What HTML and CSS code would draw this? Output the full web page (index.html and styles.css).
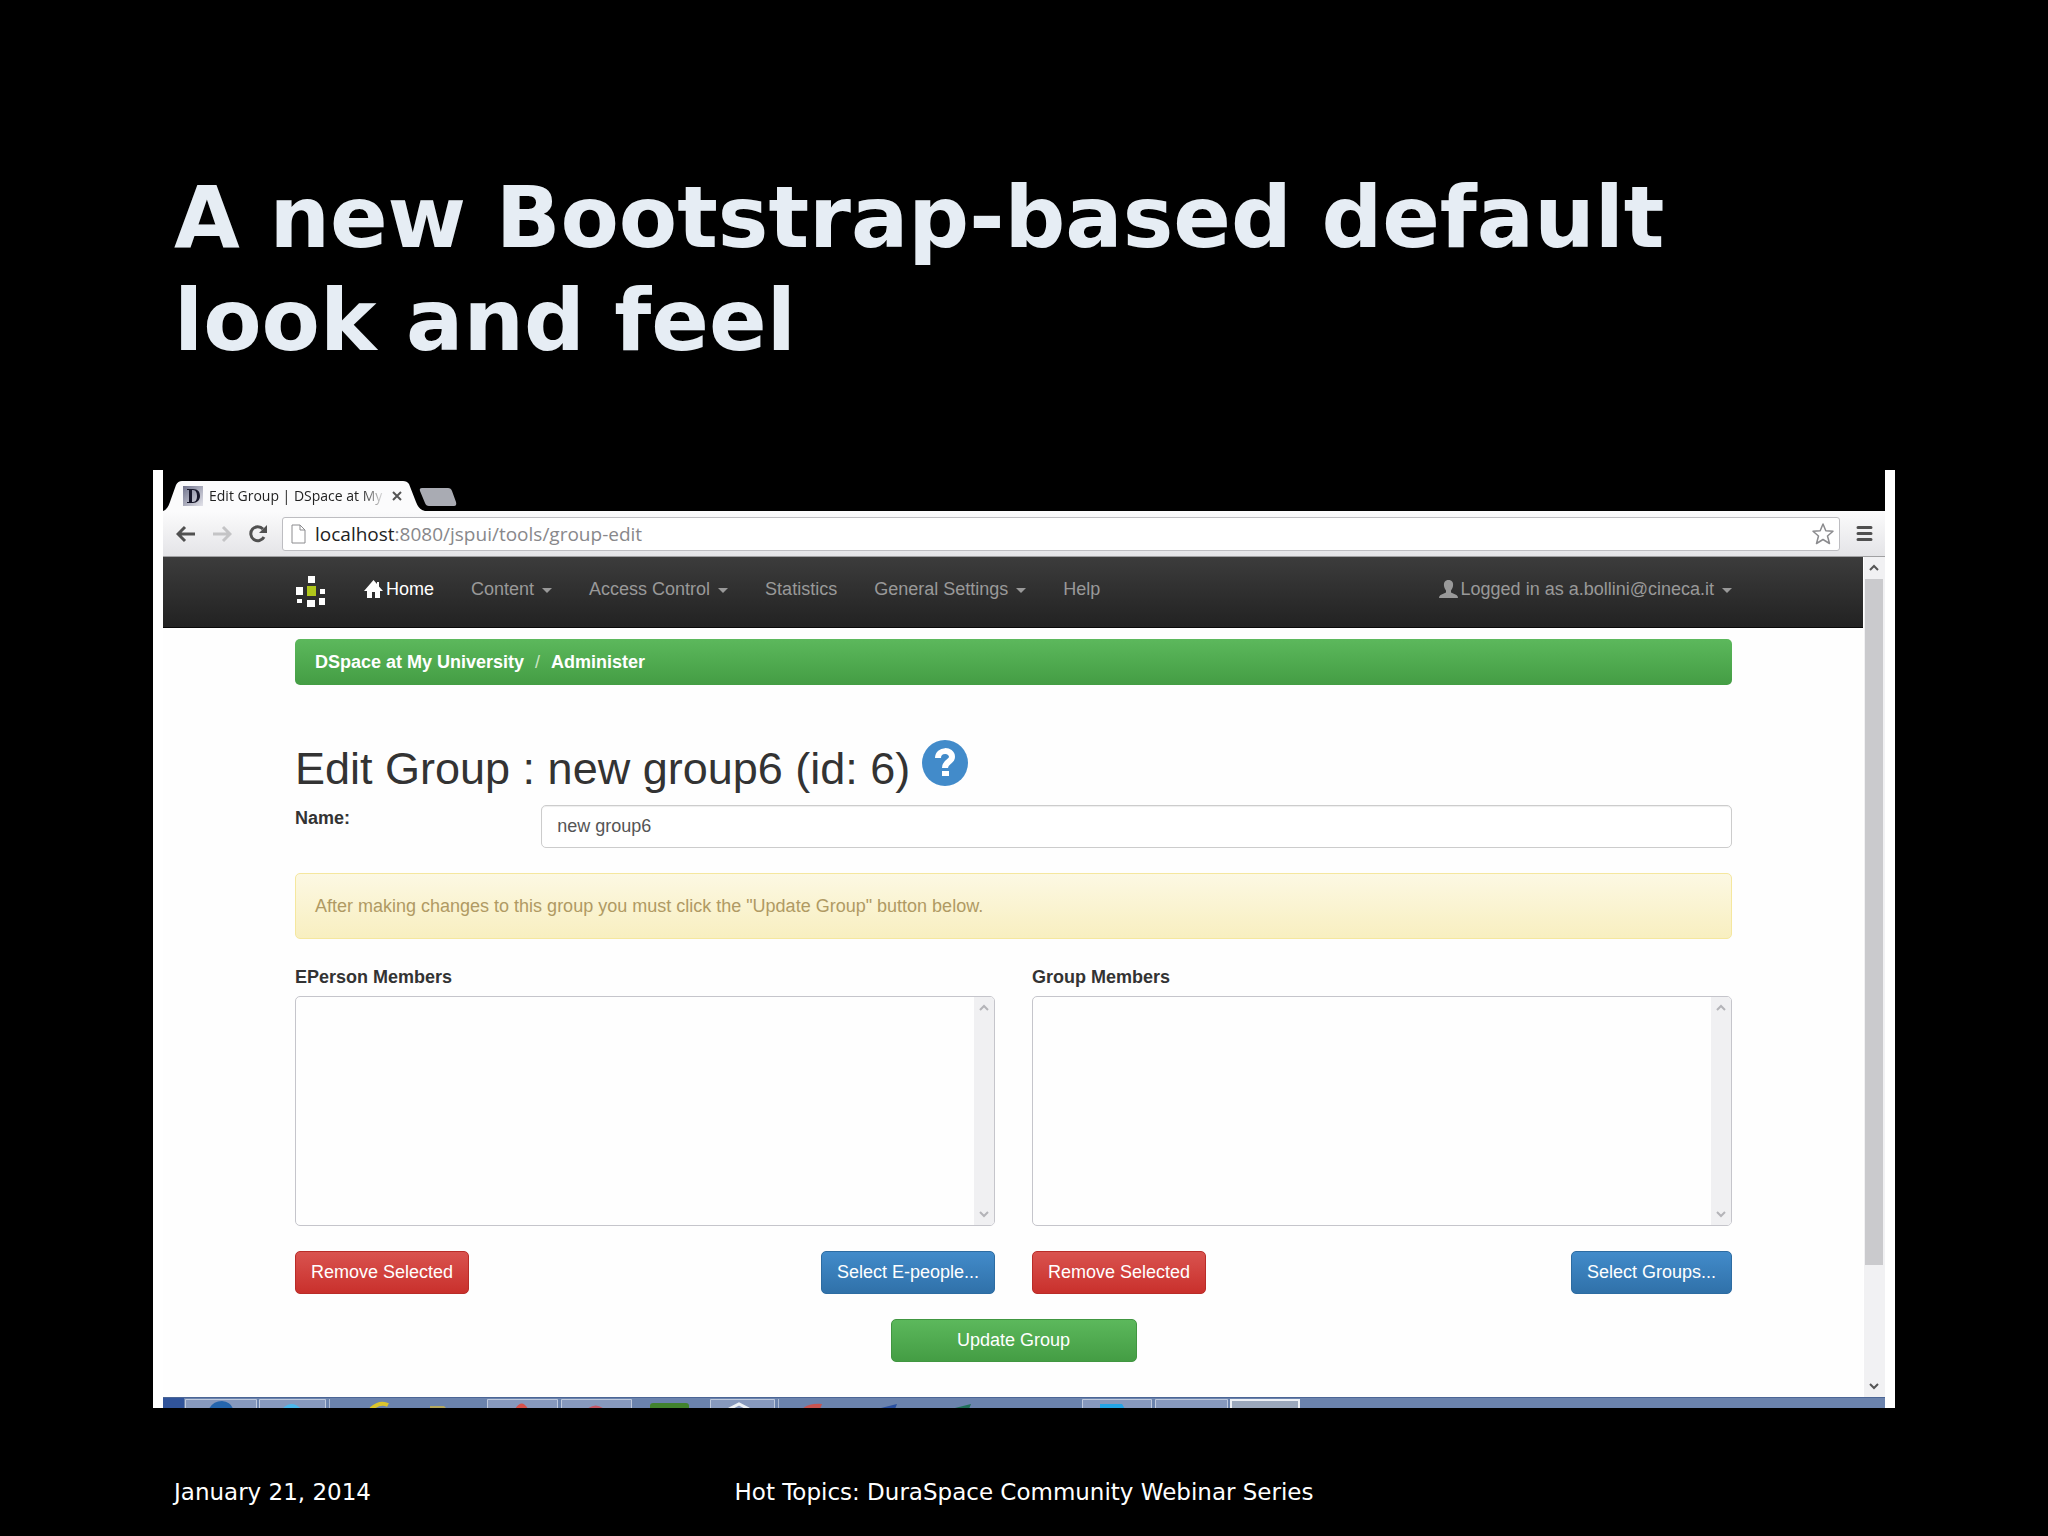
FILE: index.html
```html
<!DOCTYPE html>
<html lang="en">
<head>
<meta charset="utf-8">
<title>A new Bootstrap-based default look and feel</title>
<link rel="stylesheet" href="styles.css">
</head>
<body>
<div class="slide">
  <h1 class="slide-title">A new Bootstrap-based default<br>look and feel</h1>

  <div class="shot">
    <div class="tabs">
      <div class="tab">
        <svg class="tab-shape" viewBox="0 0 262 31" preserveAspectRatio="none" aria-hidden="true"><path d="M0 31C5 29 6 25 8 19L13 5Q15 1 19 1H240Q244 1 246 4L253 22Q256 30 262 31Z" fill="#fbfbfc"/></svg>
        <svg class="favicon" viewBox="0 0 20 20" aria-hidden="true"><defs><linearGradient id="fav" x2="1" y2="1"><stop offset="0" stop-color="#70738c"/><stop offset="1" stop-color="#e3e3ea"/></linearGradient></defs><rect width="20" height="20" fill="url(#fav)"/><path d="M4 3H10C15 3 17 6 17 10S14 17 10 17H4V16H6V4H4ZM9 4V16H10C13 16 14 13 14 10S13 4 10 4Z" fill="#17172a"/></svg>
        <span class="tab-title">Edit Group | DSpace at My</span>
        <button class="tab-close" aria-label="Close tab"><svg width="10" height="10" viewBox="0 0 10 10"><path d="M1 1L9 9M9 1L1 9" stroke="#555" stroke-width="2"/></svg></button>
      </div>
      <button class="new-tab" aria-label="New tab"><svg width="38" height="18" viewBox="0 0 38 18"><path d="M3 0H29Q32 0 33 3L37 14Q38 18 35 18H10Q7 18 6 15L1 3Q0 0 3 0Z" fill="#a9abb3"/></svg></button>
    </div>

    <div class="toolbar">
      <button class="tool" aria-label="Back"><svg width="20" height="18" viewBox="0 0 20 18"><path d="M19 9H3M9 2L2 9L9 16" fill="none" stroke="#505050" stroke-width="3"/></svg></button>
      <button class="tool" aria-label="Forward"><svg width="20" height="18" viewBox="0 0 20 18"><path d="M1 9H17M11 2L18 9L11 16" fill="none" stroke="#c4c4c6" stroke-width="3"/></svg></button>
      <button class="tool" aria-label="Reload"><svg width="20" height="20" viewBox="0 0 20 20"><path d="M16 13A7 7 0 1 1 15 5" fill="none" stroke="#505050" stroke-width="3"/><path d="M19 1V9H11Z" fill="#505050"/></svg></button>
      <div class="address">
        <svg width="15" height="20" viewBox="0 0 15 20" aria-hidden="true"><path d="M1 1H9L14 6V19H1ZM9 1V6H14" fill="#fff" stroke="#8c8c8f" stroke-width="1"/></svg>
        <span class="url"><span class="host">localhost</span>:8080/jspui/tools/group-edit</span>
        <button class="tool" aria-label="Bookmark this page"><svg width="24" height="24" viewBox="0 0 24 24"><path d="M12 2L14.800 8.800L22 9.300L16.500 14L18.500 21.500L12 17.500L5.500 21.500L7.500 14L2 9.300L9.200 8.800Z" fill="#fff" stroke="#8b8b8e" stroke-width="1.500" stroke-linejoin="round"/></svg></button>
      </div>
      <button class="tool menu" aria-label="Menu"><svg width="17" height="17" viewBox="0 0 17 17"><path d="M2 2.500H15M2 8.500H15M2 14.500H15" stroke="#505050" stroke-width="3" stroke-linecap="round"/></svg></button>
    </div>

    <div class="viewport">
      <div class="page">
        <nav class="navbar">
          <a class="brand" href="#" aria-label="DSpace"><svg width="32" height="32" viewBox="0 0 32 32"><g fill="#fff"><rect x="13" y="0" width="7" height="7"/><rect x="1" y="11" width="7" height="8"/><rect x="25" y="13" width="5" height="5"/><rect x="2" y="23" width="5" height="4"/><rect x="12" y="24" width="8" height="7"/><rect x="24" y="22" width="6" height="7"/></g><rect x="12" y="10" width="9" height="10" fill="#b0c61b"/></svg></a>
          <a class="nav-link active" href="#"><svg width="19" height="18" viewBox="0 0 19 18"><path d="M9.500 0L13 4V2H15V6.500L19 11H16V18H11V12H8V18H3V11H0Z" fill="#fff"/></svg>Home</a>
          <a class="nav-link" href="#">Content<span class="caret"></span></a>
          <a class="nav-link" href="#">Access Control<span class="caret"></span></a>
          <a class="nav-link" href="#">Statistics</a>
          <a class="nav-link" href="#">General Settings<span class="caret"></span></a>
          <a class="nav-link" href="#">Help</a>
          <a class="nav-link user" href="#"><svg width="19" height="18" viewBox="0 0 19 18"><path d="M9.500 0C13 0 14.500 2.500 14 6C13.700 8 12.500 9.500 12 10.500V12.500L17.500 15Q19 16 19 18H0Q0 16 1.500 15L7 12.500V10.500C6.500 9.500 5.300 8 5 6C4.500 2.500 6 0 9.500 0Z" fill="#999"/></svg>Logged in as a.bollini@cineca.it<span class="caret"></span></a>
        </nav>

        <main class="container">
          <div class="breadcrumb"><a href="#">DSpace at My University</a><span class="slash">/</span><a href="#">Administer</a></div>

          <div class="heading">
            <h2>Edit Group : new group6 (id: 6)</h2>
            <a href="#" aria-label="Help"><svg width="46" height="46" viewBox="0 0 46 46"><circle cx="23" cy="23" r="23" fill="#428bca"/><path d="M16 18C16 9 30 9 30 17C30 22 23 21 23 28" fill="none" stroke="#fff" stroke-width="6"/><rect x="20" y="31" width="7" height="5" fill="#fff"/></svg></a>
          </div>

          <form>
            <div class="name-row">
              <label for="name">Name:</label>
              <input id="name" type="text" value="new group6">
            </div>
            <p class="alert">After making changes to this group you must click the "Update Group" button below.</p>
            <div class="members">
              <div class="member-col">
                <label for="epeople">EPerson Members</label>
                <div class="listbox">
                  <select id="epeople" multiple></select>
                  <div class="list-scroll"><svg class="chev" viewBox="0 0 10 8"><path d="M1 6L5 2L9 6"/></svg><svg class="chev" viewBox="0 0 10 8"><path d="M1 2L5 6L9 2"/></svg></div>
                </div>
                <div class="actions"><button type="button" class="btn danger">Remove Selected</button><button type="button" class="btn primary">Select E-people...</button></div>
              </div>
              <div class="member-col">
                <label for="groups">Group Members</label>
                <div class="listbox">
                  <select id="groups" multiple></select>
                  <div class="list-scroll"><svg class="chev" viewBox="0 0 10 8"><path d="M1 6L5 2L9 6"/></svg><svg class="chev" viewBox="0 0 10 8"><path d="M1 2L5 6L9 2"/></svg></div>
                </div>
                <div class="actions"><button type="button" class="btn danger">Remove Selected</button><button type="button" class="btn primary">Select Groups...</button></div>
              </div>
            </div>
            <button type="button" class="btn success">Update Group</button>
          </form>
        </main>
      </div>
      <div class="scrollbar">
        <svg class="chev dark" viewBox="0 0 10 8"><path d="M1 6L5 2L9 6"/></svg>
        <div class="thumb"></div>
        <svg class="chev dark" viewBox="0 0 10 8"><path d="M1 2L5 6L9 2"/></svg>
      </div>
    </div>

    <div class="taskbar">
      <svg width="1721" height="11" viewBox="0 0 1721 11" aria-hidden="true">
        <rect width="21" height="11" fill="#31549a"/>
        <g fill="#8799bd" stroke="#c0cadd"><path d="M22.500 12V1.500H93.500V12M96.500 12V1.500H162.500V12M324.500 12V1.500H394.500V12M398.500 12V1.500H468.500V12M547.500 12V1.500H611.500V12M919.500 12V1.500H988.500V12M992.500 12V1.500H1064.500V12"/></g>
        <path d="M1068 12V2H1136V12" fill="#9ba8bc" stroke="#eef1f5" stroke-width="2"/>
        <path d="M166.500 1V11M615.500 1V11" stroke="#aebad2"/>
        <path d="M46 11Q50 3 59 3Q68 4 70 11Z" fill="#2565ac"/>
        <path d="M119 11Q129 1 138 11Z" fill="#4db9ed"/>
        <path d="M208 11Q217 3 225 7" fill="none" stroke="#dbc52d" stroke-width="4"/>
        <path d="M267 11V8H281L284 11Z" fill="#b5a960"/>
        <path d="M352 11Q359 0 365 11Z" fill="#d8524b"/>
        <path d="M424 11Q433 4 441 11Z" fill="#c75867"/>
        <rect x="487" y="5" width="39" height="10" rx="3" fill="#42832e"/>
        <path d="M566 11L576 6L586 11" fill="none" stroke="#edf1f6" stroke-width="3"/>
        <path d="M639 11Q646 5 659 6L657 11Z" fill="#c95450"/>
        <path d="M714 11L734 6L732 11Z" fill="#2950a0"/>
        <path d="M788 11L808 6L806 11Z" fill="#1f7058"/>
        <path d="M937 11V6H959L962 11Z" fill="#24a5e7"/>
      </svg>
    </div>
  </div>

  <footer class="slide-footer"><span>January 21, 2014</span><span>Hot Topics: DuraSpace Community Webinar Series</span></footer>
</div>
</body>
</html>
```
FILE: styles.css
```css
* { box-sizing: border-box; }
body { margin: 0; background: #000; font-family: "Liberation Sans", Arial, sans-serif; font-size: 18px; }
button { border: 0; padding: 0; background: none; font: inherit; }
svg { display: block; flex: none; }
a { color: inherit; text-decoration: none; }

.slide { display: flex; flex-direction: column; min-height: 100vh; padding: 166px 153px 0; }
.slide-title { margin: 0 0 98px; padding-left: 21px; color: #e6edf4; font: bold 85px/103px Verdana, "DejaVu Sans", sans-serif; white-space: nowrap; }
.slide-footer { display: grid; grid-template-columns: 1fr auto 1fr; margin-top: 69px; padding: 0 21px; color: #fff; font: 23px/30px Verdana, "DejaVu Sans", sans-serif; }

.shot { border: solid #fff; border-width: 0 10px; background: #000; }
.tabs { display: flex; align-items: flex-end; height: 41px; }
.tab { position: relative; display: flex; align-items: center; width: 262px; height: 31px; padding: 0 23px 0 20px; }
.tab-shape { position: absolute; inset: 0; width: 100%; height: 100%; }
.favicon, .tab-title, .tab-close { position: relative; }
.favicon { width: 20px; height: 20px; margin-right: 6px; }
.tab-title { flex: 1; color: #222; font: 14px/20px "Open Sans", sans-serif; white-space: nowrap; -webkit-mask-image: linear-gradient(90deg, #000 86%, transparent); mask-image: linear-gradient(90deg, #000 86%, transparent); }
.tab-close { margin-left: 6px; }
.new-tab { align-self: center; margin: 12px 0 0 -6px; }

.toolbar { display: flex; align-items: center; height: 46px; padding: 5px 12px 5px 13px; gap: 16px; background: linear-gradient(#fbfbfc, #e4e4e7); border-bottom: 1px solid #a0a0a2; }
.address { display: flex; flex: 1; align-items: center; gap: 9px; height: 34px; margin-left: -2px; padding: 0 4px 0 8px; background: #fff; border: 1px solid #bdbdc1; border-radius: 3px; }
.url { flex: 1; color: #88888b; font: 19px/28px "Open Sans", sans-serif; }
.host { color: #222; }

.viewport { display: flex; background: #fefefe; }
.page { flex: 1; }
.navbar { display: flex; align-items: flex-start; gap: 37px; height: 71px; padding: 19px 131px 0 132px; color: #999; background: linear-gradient(#3c3c3c, #222); border-bottom: 1px solid #080808; }
.nav-link { display: flex; align-items: center; height: 26px; white-space: nowrap; }
.nav-link svg { margin-right: 3px; }
.active { color: #fff; }
.user { margin-left: auto; }
.caret { margin: 2px 0 0 8px; border: 5px solid transparent; border-top-color: currentColor; border-bottom: 0; }

.container { padding: 11px 131px 35px 132px; color: #333; }
.breadcrumb { display: flex; gap: 11px; padding: 12px 20px; height: 46px; border-radius: 5px; color: #fff; font-weight: bold; line-height: 22px; background: linear-gradient(#5cb85c, #449d44); }
.slash { font-weight: normal; color: #cce5c4; }
.heading { display: flex; gap: 12px; margin-top: 55px; height: 60px; }
.heading h2 { margin: 0; font-size: 45px; font-weight: normal; line-height: 58px; white-space: nowrap; }

.name-row { display: grid; grid-template-columns: 17% 1fr; gap: 2px; margin-top: 5px; }
label { font-weight: bold; line-height: 26px; }
input { height: 43px; padding: 0 15px; border: 1px solid #ccc; border-radius: 5px; background: #fff; box-shadow: inset 0 1px 1px #eee; color: #555; font: inherit; }
.alert { margin: 25px 0; padding: 20px 19px; border: 1px solid #f5e79e; border-radius: 5px; color: #b09a63; background: linear-gradient(#fcf8e3, #f8efc0); line-height: 24px; }
.members { display: grid; grid-template-columns: 1fr 1fr; gap: 37px; }
.member-col { display: flex; flex-direction: column; }
.listbox { display: flex; height: 230px; margin-top: 6px; border: 1px solid #c5c5cb; border-radius: 5px; background: #fefefe; overflow: hidden; }
select { flex: 1; border: 0; background: none; }
.list-scroll { display: flex; flex-direction: column; justify-content: space-between; align-items: center; width: 20px; padding: 7px 0; background: #f0f0f2; }
.chev { width: 10px; height: 8px; fill: none; stroke: #b4b4b8; stroke-width: 2; }
.dark { stroke: #555; }
.actions { display: flex; justify-content: space-between; margin-top: 25px; }
.btn { height: 43px; padding: 0 15px; border: 1px solid; border-radius: 5px; color: #fff; }
.danger { border-color: #b92c28; background: linear-gradient(#d9534f, #c9302c); }
.primary { border-color: #2d6ca2; background: linear-gradient(#428bca, #3071a9); }
.success { display: block; width: 246px; margin: 25px auto 0; border-color: #419641; background: linear-gradient(#5cb85c, #449d44); }

.scrollbar { display: flex; flex-direction: column; align-items: center; width: 22px; padding: 7px 2px 7px 0; background: #f1f1f3; border-left: 1px solid #fff; }
.thumb { flex: none; width: 18px; height: 83%; margin: 7px 0 auto; background: #cacacd; }
.taskbar { height: 11px; overflow: hidden; background: #6b83ad; border-top: 1px solid #4c6695; }
```
